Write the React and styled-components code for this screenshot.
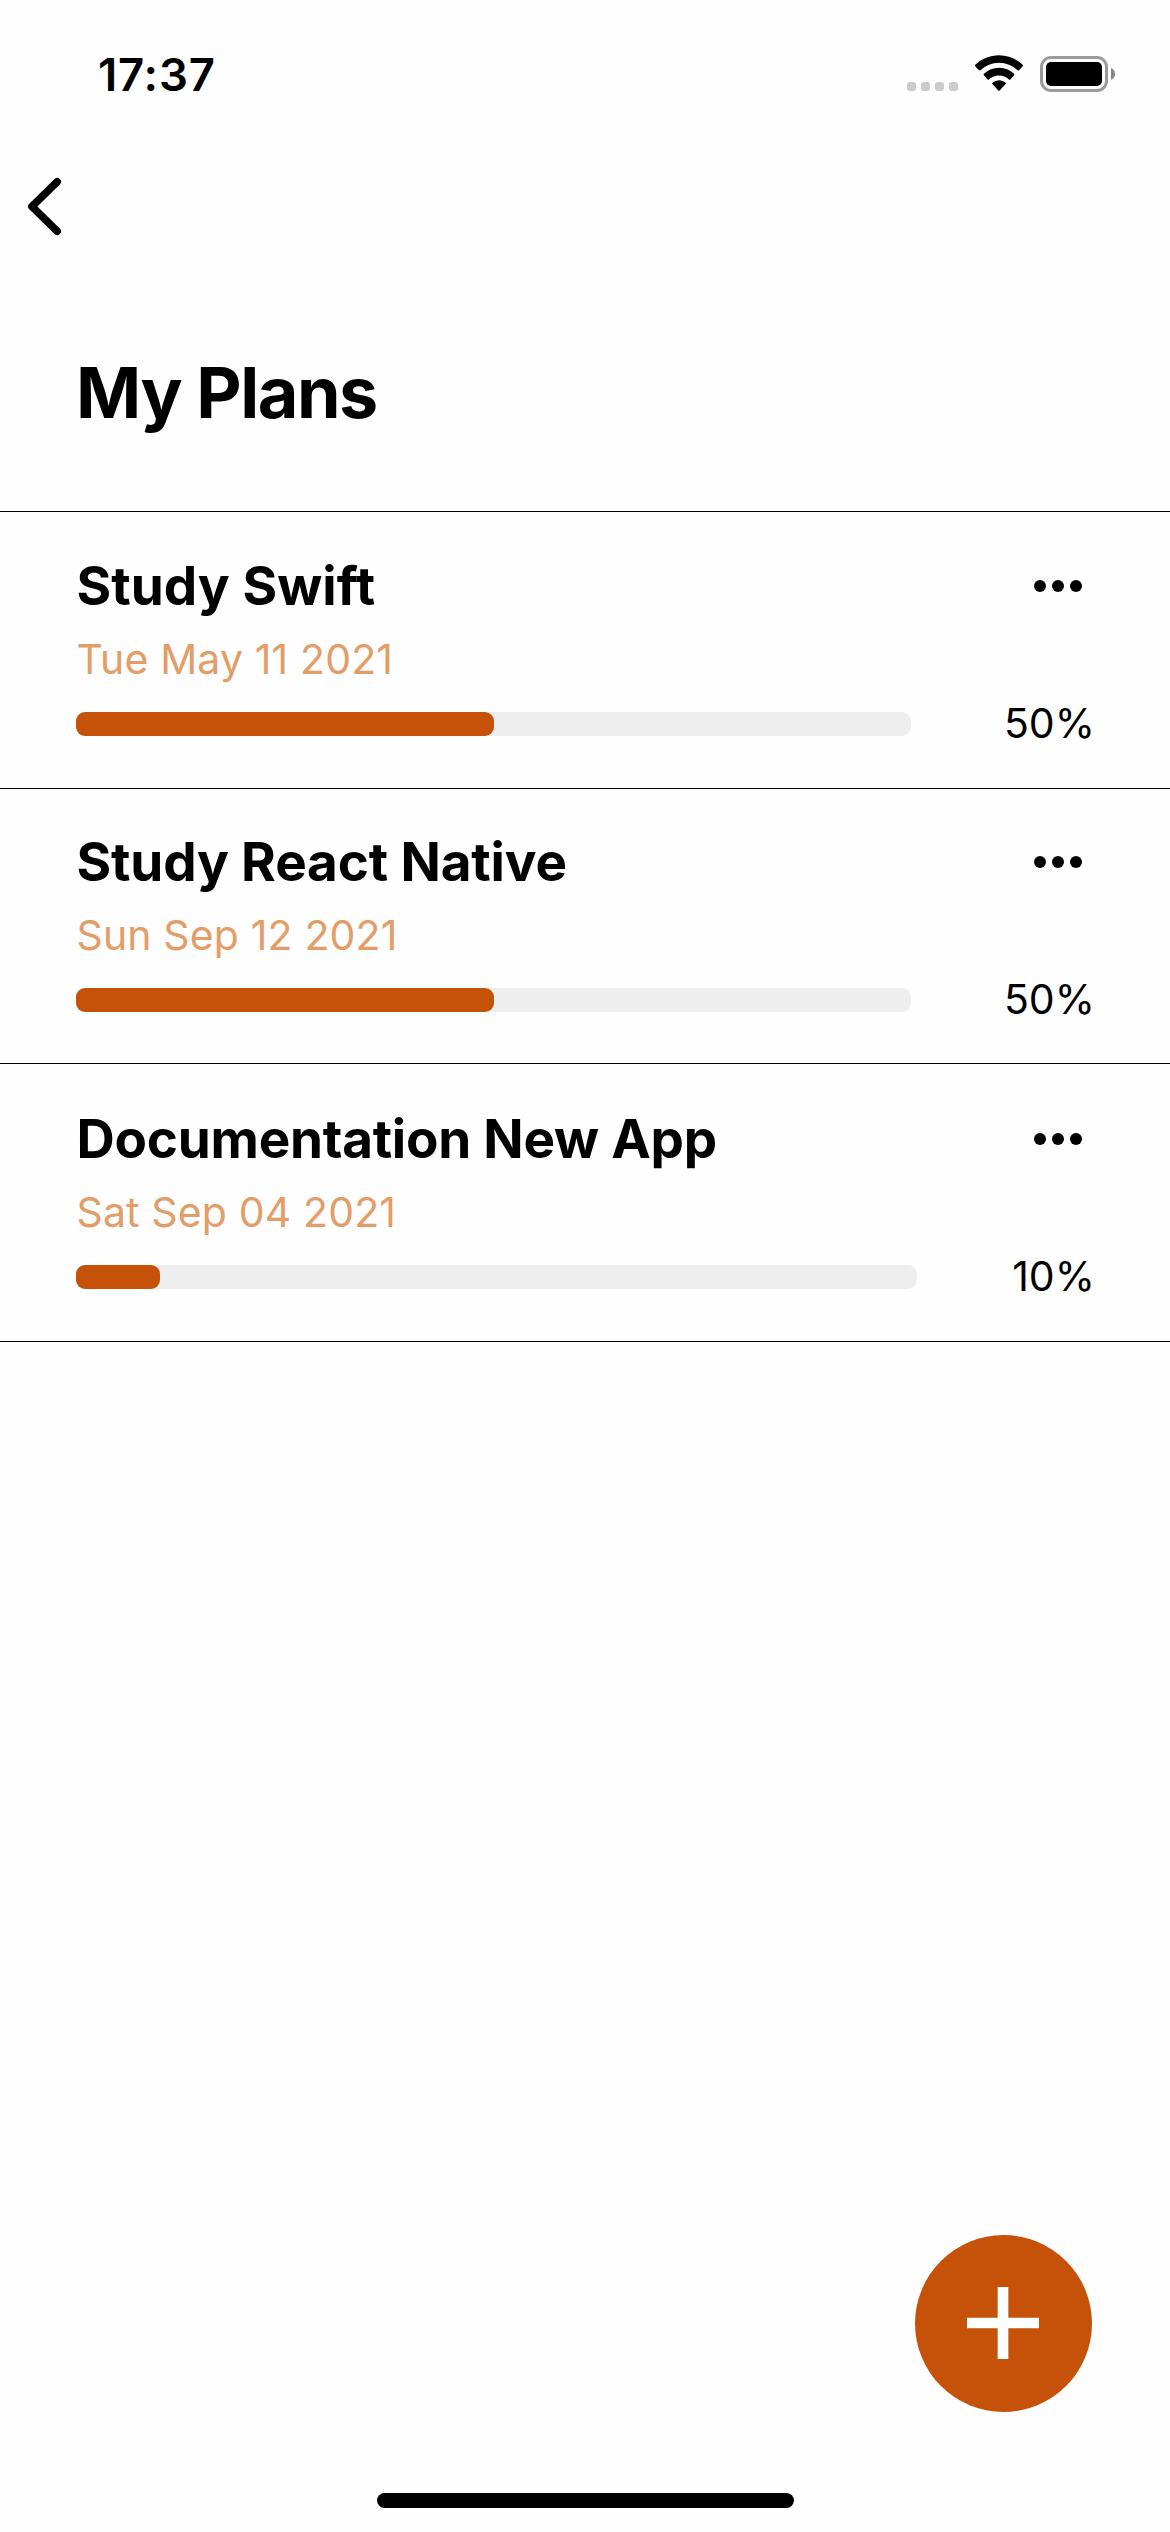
import React from "react";
import styled, { createGlobalStyle } from "styled-components";

const GlobalStyle = createGlobalStyle`
  *, *::before, *::after { box-sizing: border-box; }
  body {
    margin: 0;
    background: #fefefe;
    color: #000;
    font-family: Inter, "Liberation Sans", sans-serif;
  }
  button { border: 0; padding: 0; background: none; color: inherit; font: inherit; }
`;

const Screen = styled.div`
  display: flex;
  flex-direction: column;
  width: 1170px;
  height: 2532px;
  overflow: hidden;
`;

const StatusBar = styled.header`
  display: flex;
  justify-content: space-between;
  height: 141px;
  padding: 47px 55px 0 98px;
`;

const Clock = styled.time`
  font-size: 45.5px;
  font-weight: 600;
  line-height: 56px;
  letter-spacing: 0.85px;
`;

const StatusIcons = styled.div`
  display: flex;
  align-items: flex-start;
  padding-top: 8px;
`;

const Signal = styled.div`
  display: flex;
  gap: 5px;
  margin: 27px 17px 0 0;
`;

const SignalDot = styled.span`
  width: 9px;
  height: 9px;
  border-radius: 3px;
  background: #cbcbcb;
`;

const NavBar = styled.nav`
  display: flex;
  align-items: center;
  height: 131px;
  padding-left: 24px;
`;

const BackButton = styled.button`
  display: flex;
  width: 44px;
  height: 60px;
`;

const PageTitle = styled.h1`
  height: 239px;
  margin: 0;
  padding: 78px 0 0 76px;
  font-size: 70px;
  font-weight: 700;
  line-height: 86px;
  letter-spacing: -1.45px;
`;

const PlanList = styled.ul`
  margin: 0;
  padding: 0;
  list-style: none;
  border-top: 1px solid #000;
`;

const PlanItem = styled.li`
  height: ${(p) => p.$height}px;
  padding: ${(p) => p.$top}px 76px 0;
  border-bottom: 1px solid #000;
`;

const PlanHead = styled.div`
  display: flex;
  align-items: center;
  justify-content: space-between;
  height: 64px;
`;

const PlanName = styled.h2`
  margin: 0;
  padding-left: 0.5px;
  font-size: 53px;
  font-weight: 700;
  line-height: 64px;
  letter-spacing: ${(p) => p.$tracking}px;
  white-space: nowrap;
`;

const MoreButton = styled.button`
  display: flex;
  gap: 6px;
  margin-right: 12px;
`;

const MoreDot = styled.span`
  width: 12px;
  height: 12px;
  border-radius: 50%;
  background: #000;
`;

const PlanDate = styled.p`
  margin: 16px 0 0;
  padding-left: 0.5px;
  color: #e29d68;
  font-size: 41px;
  line-height: 50px;
  letter-spacing: 0.14px;
`;

const ProgressRow = styled.div`
  display: flex;
  align-items: center;
  justify-content: space-between;
  height: 50px;
  margin-top: 15px;
`;

const Track = styled.div`
  width: ${(p) => p.$width}px;
  height: 24px;
  border-radius: 9px;
  background: #eee;
`;

const Fill = styled.div`
  height: 100%;
  border-radius: 9px;
  background: #c65108;
`;

const Percent = styled.span`
  margin-right: -1px;
  padding-bottom: 2px;
  font-size: 41px;
  line-height: 50px;
`;

const Footer = styled.footer`
  display: flex;
  flex-direction: column;
  align-items: flex-end;
  margin-top: auto;
  padding: 0 78px 24px 0;
`;

const AddButton = styled.button`
  display: flex;
  align-items: center;
  justify-content: center;
  width: 177px;
  height: 177px;
  margin-bottom: 81px;
  border-radius: 50%;
  background: #c65108;
`;

const HomeIndicator = styled.div`
  align-self: flex-start;
  width: 417px;
  height: 15px;
  margin-left: 377px;
  border-radius: 7.5px;
  background: #000;
`;

const BatterySvg = styled.svg`
  margin-left: 17px;
`;

const WifiIcon = () => (
  <svg width="48" height="37" viewBox="0 0 48 37">
    <path d="M24 .2c9 0 17.500 3.500 23.700 9.600.4.400.4 1 0 1.400L44 15.300c-.4.400-1 .4-1.400 0A27 27 0 0 0 5.400 15.300c-.4.400-1 .4-1.400 0L.3 11.200c-.4-.4-.4-1 0-1.400C6.500 3.700 15 .2 24 .2Z" />
    <path d="M24 12.800c5.700 0 11 2.200 15.100 6 .4.400.4 1 0 1.400L35.400 24.500c-.4.400-1 .4-1.400 0a14.600 14.600 0 0 0-20 0c-.4.400-1 .4-1.400 0L8.900 20.200c-.4-.4-.4-1 0-1.400A22 22 0 0 1 24 12.800Z" />
    <path d="M24 25.200c2.500 0 4.800.9 6.600 2.500.4.400.4 1 0 1.400l-5.900 6.400c-.4.400-1 .4-1.400 0l-5.900-6.400c-.4-.4-.4-1 0-1.400A10 10 0 0 1 24 25.200Z" />
  </svg>
);

const BatteryIcon = () => (
  <BatterySvg width="75" height="37" viewBox="0 0 75 37">
    <rect x="1.500" y="2.500" width="65" height="33" rx="9.500" fill="none" stroke="#9b9b9b" strokeWidth="3" />
    <rect x="6" y="7" width="56" height="24" rx="5" />
    <path d="M71 13v12c2.400-1 4-3.300 4-6s-1.600-5-4-6Z" fill="#868686" />
  </BatterySvg>
);

const plans = [
  { name: "Study Swift", date: "Tue May 11 2021", done: 50, track: 835, height: 277, top: 42, tracking: 0.06 },
  { name: "Study React Native", date: "Sun Sep 12 2021", done: 50, track: 835, height: 275, top: 41, tracking: -0.15 },
  { name: "Documentation New App", date: "Sat Sep 04 2021", done: 10, track: 841, height: 278, top: 43, tracking: -0.24 },
];

const Plan = ({ plan }) => (
  <PlanItem $height={plan.height} $top={plan.top}>
    <PlanHead>
      <PlanName $tracking={plan.tracking}>{plan.name}</PlanName>
      <MoreButton aria-label="More">
        <MoreDot />
        <MoreDot />
        <MoreDot />
      </MoreButton>
    </PlanHead>
    <PlanDate>{plan.date}</PlanDate>
    <ProgressRow>
      <Track $width={plan.track}>
        <Fill style={{ width: `${plan.done}%` }} />
      </Track>
      <Percent>{plan.done}%</Percent>
    </ProgressRow>
  </PlanItem>
);

export default function App() {
  return (
    <Screen>
      <GlobalStyle />
      <StatusBar>
        <Clock>17:37</Clock>
        <StatusIcons>
          <Signal>
            <SignalDot />
            <SignalDot />
            <SignalDot />
            <SignalDot />
          </Signal>
          <WifiIcon />
          <BatteryIcon />
        </StatusIcons>
      </StatusBar>
      <NavBar>
        <BackButton aria-label="Back">
          <svg width="44" height="60" viewBox="0 0 44 60" fill="none" stroke="#000" strokeWidth="7.600" strokeLinecap="round" strokeLinejoin="round">
            <path d="M33.200 4.700 7.900 29.500l25.300 24.800" />
          </svg>
        </BackButton>
      </NavBar>
      <PageTitle>My Plans</PageTitle>
      <PlanList>
        {plans.map((plan) => (
          <Plan key={plan.name} plan={plan} />
        ))}
      </PlanList>
      <Footer>
        <AddButton aria-label="Add plan">
          <svg width="74" height="74" viewBox="0 0 74 74" fill="none" stroke="#fff" strokeWidth="10.700">
            <path d="M36 0v72M0 36h72" />
          </svg>
        </AddButton>
        <HomeIndicator />
      </Footer>
    </Screen>
  );
}
